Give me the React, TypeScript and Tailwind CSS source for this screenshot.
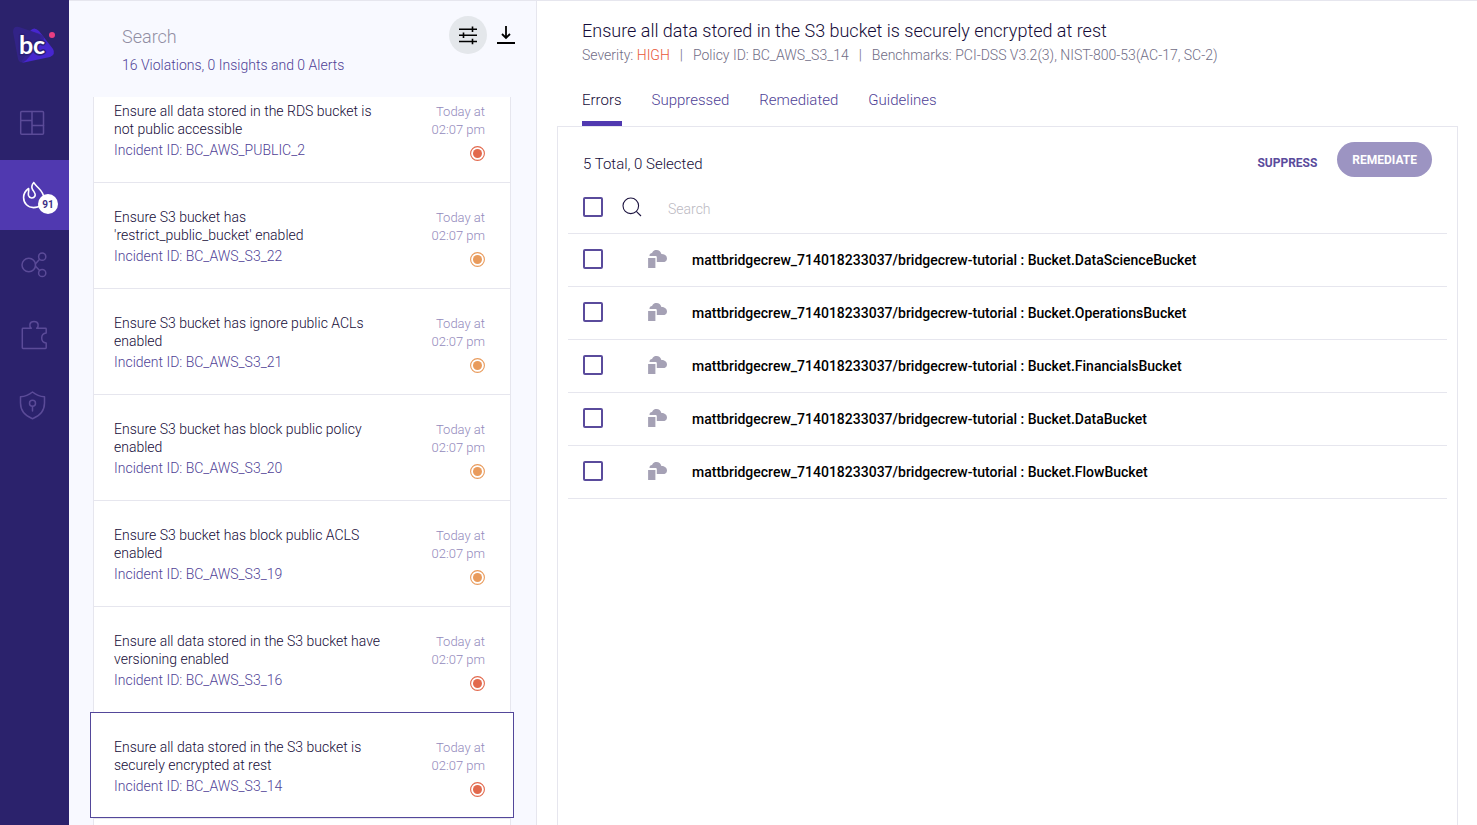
import React from "react";

type Severity = "high" | "medium";

interface Incident {
  title: string;
  id: string;
  severity: Severity;
  selected?: boolean;
}

const incidents: Incident[] = [
  { title: "Ensure all data stored in the RDS bucket is not public accessible", id: "BC_AWS_PUBLIC_2", severity: "high" },
  { title: "Ensure S3 bucket has 'restrict_public_bucket' enabled", id: "BC_AWS_S3_22", severity: "medium" },
  { title: "Ensure S3 bucket has ignore public ACLs enabled", id: "BC_AWS_S3_21", severity: "medium" },
  { title: "Ensure S3 bucket has block public policy enabled", id: "BC_AWS_S3_20", severity: "medium" },
  { title: "Ensure S3 bucket has block public ACLS enabled", id: "BC_AWS_S3_19", severity: "medium" },
  { title: "Ensure all data stored in the S3 bucket have versioning enabled", id: "BC_AWS_S3_16", severity: "high" },
  { title: "Ensure all data stored in the S3 bucket is securely encrypted at rest", id: "BC_AWS_S3_14", severity: "high", selected: true },
];

const resources = ["DataScienceBucket", "OperationsBucket", "FinancialsBucket", "DataBucket", "FlowBucket"];

const tabs = ["Errors", "Suppressed", "Remediated", "Guidelines"];

function Logo() {
  return (
    <svg viewBox="0 0 69 90" className="block h-[90px] w-full" aria-label="bc" role="img">
      <path d="M30 31 Q34 26 39 31 L53 49 Q56 54 50 57 L24 62.500 Q20 63 23 59 L40 39 Q42 36 38 34 Z" fill="#4726cf" />
      <path d="M13 32 Q13 26 19 27 L40 34 Q46 37 43 41 L26 60.500 Q20 65 18 59 Z" fill="#34238c" fillOpacity="0.85" />
      <circle cx="52" cy="35" r="3" fill="#e83e82" />
      <text x="32" y="54" textAnchor="middle" fill="#fff" stroke="#2b1f78" strokeWidth="3" strokeLinejoin="round" paintOrder="stroke" className="font-['Lato',sans-serif] text-[25px] font-bold">
        bc
      </text>
    </svg>
  );
}

function NavItem({ label, active, top, children }: { label: string; active?: boolean; top: number; children: React.ReactNode }) {
  return (
    <a href="#" aria-label={label} className={active ? "block h-[70px] bg-[#5039b0] text-white" : "block h-[70px] text-[#5b4b98]"}>
      <svg viewBox={`0 ${top} 69 70`} className="block h-full w-full" fill="none" stroke="currentColor" strokeWidth="1.5" strokeLinejoin="round" strokeLinecap="round">
        {children}
      </svg>
    </a>
  );
}

function Sidebar() {
  return (
    <nav className="w-[69px] shrink-0 bg-[#2b226c]">
      <Logo />
      <NavItem label="Dashboard" top={90}>
        <rect x="20.700" y="111.500" width="22.800" height="22.800" rx="1" />
        <path d="M32 111.500V134.300M20.700 120.500H32M32 125.500H43.500" />
      </NavItem>
      <NavItem label="Incidents" top={160} active>
        <path
          strokeWidth="1.6"
          d="M33.800 182.500C31.600 185 31.200 187 32.500 189.500C34.800 192.500 36 194 35 196C33.500 198.800 29.500 198.600 28.500 195.500C27.800 193 29.300 191 28.600 188.500C25 191 23.600 194 23.600 197.500C23.600 203.500 28 207.600 33.500 207.600C39.500 207.600 43.800 203.500 43.800 198C43.800 193 41 190.500 38 187.500C36 185.500 34.700 184.300 33.800 182.500Z"
        />
        <circle cx="48" cy="204" r="10" fill="#fff" stroke="none" />
        <text x="48" y="208" textAnchor="middle" fill="#3d3085" stroke="none" className="text-[10px] font-bold">
          91
        </text>
      </NavItem>
      <NavItem label="Resources" top={230}>
        <circle cx="28.800" cy="265" r="6.800" />
        <circle cx="42.200" cy="256.700" r="3.600" />
        <circle cx="42.200" cy="273" r="3.600" />
        <path d="M35.300 264L39.600 259.300M35.300 266L39.600 270.500" />
      </NavItem>
      <NavItem label="Integrations" top={300}>
        <path d="M23 328.300H31.300C29 326.500 29 321.500 34 321.500C39 321.500 39 326.500 36.700 328.300H45.500Q46.200 328.300 46.200 329V333C40.200 333.500 40.200 342.500 46.200 343V347.700Q46.200 348.400 45.500 348.400H23Q22.300 348.400 22.300 347.700V329Q22.300 328.300 23 328.300Z" />
      </NavItem>
      <NavItem label="Policies" top={370}>
        <path d="M32.500 392C29 394.800 25 396.400 20.500 396.800V403C20.500 410.500 25 415.800 32.500 418.700C40 415.800 44.500 410.500 44.500 403V396.800C40 396.400 36 394.800 32.500 392Z" />
        <circle cx="32.500" cy="403.300" r="3" />
        <path d="M32.500 406.500V411" />
      </NavItem>
    </nav>
  );
}

function SeverityDot({ severity }: { severity: Severity }) {
  return (
    <svg viewBox="0 0 15 15" className={severity === "high" ? "h-[15px] w-[15px] text-[#e2694d]" : "h-[15px] w-[15px] text-[#e99b5c]"}>
      <circle cx="7.500" cy="7.500" r="6.900" fill="none" stroke="currentColor" strokeWidth="1.100" />
      <circle cx="7.500" cy="7.500" r="4.500" fill="currentColor" />
    </svg>
  );
}

function IncidentCard({ incident }: { incident: Incident }) {
  return (
    <li
      className={
        incident.selected
          ? "relative -mt-px ml-[21px] mr-[22px] h-[106px] shrink-0 border border-[#53479a] bg-white pl-[23px] pr-7 pt-[25px]"
          : "ml-6 mr-[25px] h-[106px] shrink-0 border-x border-b border-[#e6e6ee] bg-white pl-5 pr-[25px] pt-[25px]"
      }
    >
      <a href="#" className="flex justify-between">
        <span className="w-[270px] text-sm leading-[18px]">
          <span className="block text-[#150c38]">{incident.title}</span>
          <span className="mt-[3px] block text-[#4f3f96]">Incident ID: {incident.id}</span>
        </span>
        <span className="flex w-16 flex-col items-end pt-px text-right text-[13px] leading-[18px] text-[#938abc]">
          Today at 02:07 pm
          <span className="mt-[7px]">
            <SeverityDot severity={incident.severity} />
          </span>
        </span>
      </a>
    </li>
  );
}

function IncidentList() {
  return (
    <section className="flex w-[468px] shrink-0 flex-col border-r border-[#e6e6ee] bg-[#f8f9ff]">
      <header className="flex h-24 shrink-0 justify-between pl-[53px] pr-5 pt-[15px]">
        <div className="flex flex-col">
          <input
            aria-label="Search incidents"
            placeholder="Search"
            className="h-10 w-60 bg-transparent text-lg leading-6 outline-none placeholder:text-[#918ea3]"
          />
          <p className="text-sm leading-[18px] text-[#4f3f96]">16 Violations, 0 Insights and 0 Alerts</p>
        </div>
        <div className="flex h-[38px] items-center gap-[9px]">
          <button aria-label="Filter" className="flex h-[38px] w-[38px] items-center justify-center rounded-full bg-[#e4e7eb]">
            <svg viewBox="0 0 20 20" className="h-5 w-5" fill="none" stroke="#000" strokeWidth="1.600">
              <path d="M1 4.200H19M1 10.200H19M1 16.500H19M14.500 1.500V7M5.500 7.500V13M14.500 13.800V19.200" />
            </svg>
          </button>
          <button aria-label="Download" className="flex h-5 w-5 items-center justify-center">
            <svg viewBox="0 0 20 20" className="h-5 w-5" fill="none" stroke="#000" strokeWidth="1.800">
              <path d="M10 1V12.500M6 9L10 13L14 9M1 18H19" />
            </svg>
          </button>
        </div>
      </header>
      <ul className="flex min-h-0 flex-1 flex-col overflow-hidden">
        <li className="-mt-5" />
        {incidents.map((incident) => (
          <IncidentCard key={incident.id} incident={incident} />
        ))}
        <li className="ml-6 mr-[25px] flex-1 border-x border-t border-[#e6e6ee] bg-white" />
      </ul>
    </section>
  );
}

function Checkbox({ label }: { label: string }) {
  return (
    <input
      type="checkbox"
      aria-label={label}
      className="h-5 w-5 shrink-0 appearance-none rounded-[2px] border-2 border-[#5a4b9c] bg-white checked:bg-[#5a4b9c]"
    />
  );
}

function StackIcon() {
  return (
    <svg viewBox="0 0 20 20" className="block h-5 w-5" fill="#a5a1b5">
      <path d="M2.500 7C2.300 5 3.600 4 5 4C6 1.500 8 1 9.600 1C12 1 13.600 2.500 14.400 5C17 4.800 20 6.400 20 9.400C20 12 18 13 16 13H9.500V7Z" />
      <path d="M.5 8.500H9V19.500H.5Z" stroke="#fff" strokeWidth="1.200" />
    </svg>
  );
}

function Details() {
  return (
    <main className="flex min-w-0 flex-1 flex-col bg-white pl-5 pr-[19px] pt-[18px]">
      <header className="pl-[25px]">
        <h1 className="text-lg leading-6 text-[#150c38]">Ensure all data stored in the S3 bucket is securely encrypted at rest</h1>
        <p className="mt-[3px] flex gap-[10px] text-sm leading-[18px] text-[#716d86]">
          <span>
            Severity: <span className="text-[#e8573a]">HIGH</span>
          </span>
          <span>|</span>
          <span>Policy ID: BC_AWS_S3_14</span>
          <span>|</span>
          <span>Benchmarks: PCI-DSS V3.2(3), NIST-800-53(AC-17, SC-2)</span>
        </p>
        <div role="tablist" className="mt-[26px] flex h-9 gap-[30px] text-[15px] leading-5">
          {tabs.map((tab, i) => (
            <button
              key={tab}
              role="tab"
              aria-selected={i === 0}
              className={
                i === 0
                  ? "flex items-start border-b-[5px] border-[#5039b0] text-[#150c38]"
                  : "flex items-start border-b-[5px] border-transparent text-[#4f3f96]"
              }
            >
              {tab}
            </button>
          ))}
        </div>
      </header>
      <section className="flex-1 border-x border-t border-[#e6e6ee] px-[10px] pt-[15px]">
        <div className="flex h-[35px] items-center justify-between px-[15px]">
          <p className="pt-2 text-[15px] leading-5 text-[#150c38]">5 Total, 0 Selected</p>
          <div className="flex items-center gap-5">
            <button className="pt-1.5 text-xs leading-4 font-bold text-[#5a4b9c]">SUPPRESS</button>
            <button className="h-[35px] rounded-full bg-[#9c94c2] px-[15px] text-xs font-bold text-white">REMEDIATE</button>
          </div>
        </div>
        <div className="flex h-[57px] items-center border-b border-[#e6e6ee] pl-[15px] pt-1">
          <Checkbox label="Select all" />
          <svg viewBox="0 0 20 20" className="ml-[19px] h-5 w-5" fill="none" stroke="#1d1440" strokeWidth="1.100">
            <circle cx="8.800" cy="8.800" r="7.800" />
            <path d="M14.300 14.300L19 19" />
          </svg>
          <input aria-label="Search resources" placeholder="Search" className="ml-[26px] mt-1 h-8 flex-1 text-sm outline-none placeholder:text-[#bbb9c2]" />
        </div>
        <ul>
          {resources.map((name) => (
            <li key={name} className="flex h-[53px] items-start border-b border-[#e6e6ee] pl-[15px] pt-[15px]">
              <Checkbox label={name} />
              <span className="ml-11">
                <StackIcon />
              </span>
              <span className="ml-[25px] text-sm leading-[22px] font-medium text-black">
                mattbridgecrew_714018233037/bridgecrew-tutorial : Bucket.{name}
              </span>
            </li>
          ))}
        </ul>
      </section>
    </main>
  );
}

export default function App() {
  return (
    <div className="flex h-screen overflow-hidden font-['Roboto',sans-serif] font-light">
      <Sidebar />
      <div className="flex min-w-0 flex-1 border-t border-[#e6e6ee]">
        <IncidentList />
        <Details />
      </div>
    </div>
  );
}
